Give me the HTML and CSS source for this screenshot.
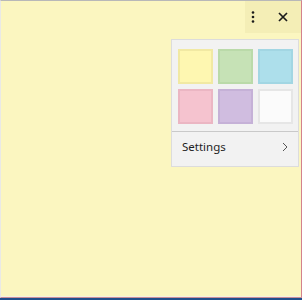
FILE: index.html
```html
<!DOCTYPE html>
<html>
<head>
    <title>Sticky note</title>
    <link rel="stylesheet" href="styles.css">
</head>
<body>
    <div class="window">
        <div class="note">
            <div class="titlebar">
                <div class="tools">
                    <button class="tool menu-btn" title="Menu">
                        <svg width="4" height="12" viewBox="0 0 4 12">
                            <circle cx="2" cy="1.5" r="1.3" fill="#1b1b1b"/>
                            <circle cx="2" cy="6" r="1.3" fill="#1b1b1b"/>
                            <circle cx="2" cy="10.5" r="1.3" fill="#1b1b1b"/>
                        </svg>
                    </button>
                    <button class="tool close-btn" title="Close">
                        <svg width="10" height="10" viewBox="0 0 10 10">
                            <path d="M1 1 L9 9 M9 1 L1 9" stroke="#1b1b1b" stroke-width="1.7" fill="none"/>
                        </svg>
                    </button>
                </div>
            </div>

            <div class="menu">
                <div class="swatches">
                    <div class="swatch yellow"></div>
                    <div class="swatch green"></div>
                    <div class="swatch blue"></div>
                    <div class="swatch pink"></div>
                    <div class="swatch purple"></div>
                    <div class="swatch white"></div>
                </div>
                <div class="menu-item">
                    <span>Settings</span>
                    <svg width="6" height="10" viewBox="0 0 6 10">
                        <path d="M1 1 L5 5 L1 9" stroke="#555" stroke-width="1" fill="none"/>
                    </svg>
                </div>
            </div>
        </div>
    </div>
    <div class="taskbar"></div>
</body>
</html>
```

FILE: styles.css
```css
html, body {
    margin: 0;
    padding: 0;
}

body {
    width: 302px;
    height: 300px;
    display: flex;
    flex-direction: column;
    font-family: "Noto Sans", sans-serif;
    background: #1f4e8c;
}

.window {
    flex: 1;
    display: flex;
    border-top: 1px solid #b8b8b8;
    border-left: 1px solid #e9e9e6;
    border-right: 1px solid #d4828c;
    border-bottom: 1px solid #c98e98;
    background: #ededed;
}

.note {
    flex: 1;
    position: relative;
    background: #fbf6c0;
    border-bottom: 1px solid #f3f1e4;
}

.taskbar {
    height: 2px;
    background: #1f4e8c;
}

.titlebar {
    display: flex;
    justify-content: flex-end;
}

.tools {
    display: flex;
    gap: 6px;
    background: #f4eeb6;
    height: 32px;
    width: 56px;
}

.tool {
    border: none;
    background: transparent;
    padding: 0;
    display: flex;
    align-items: center;
    justify-content: center;
}

.menu-btn {
    width: 16px;
}

.close-btn {
    width: 32px;
}

.menu {
    position: absolute;
    top: 38px;
    left: 170px;
    width: 126px;
    height: 126px;
    background: #f2f2f2;
    border: 1px solid #dcdcdc;
}

.swatches {
    display: grid;
    grid-template-columns: repeat(3, 35px);
    grid-auto-rows: 35px;
    gap: 5px;
    padding: 9px 0 0 6px;
}

.swatch {
    box-sizing: border-box;
    border: 2px solid rgba(0, 0, 0, 0.05);
}

.yellow { background: #fef7b1; border-color: #f1e9a3; }
.green  { background: #c6e2b6; border-color: #badaa9; }
.blue   { background: #addfeb; border-color: #a2d6e3; }
.pink   { background: #f5c3cf; border-color: #ebb6c3; }
.purple { background: #d0bde0; border-color: #c5b1d7; }
.white  { background: #fbfbfb; border-color: #e6e6e6; }

.menu-item {
    box-sizing: border-box;
    margin-top: 7px;
    border-top: 1px solid #c9c9c9;
    height: 34px;
    display: flex;
    align-items: center;
    justify-content: space-between;
    padding: 0 10px 4px 10px;
    font-size: 11.5px;
    color: #1e1e1e;
}
```
